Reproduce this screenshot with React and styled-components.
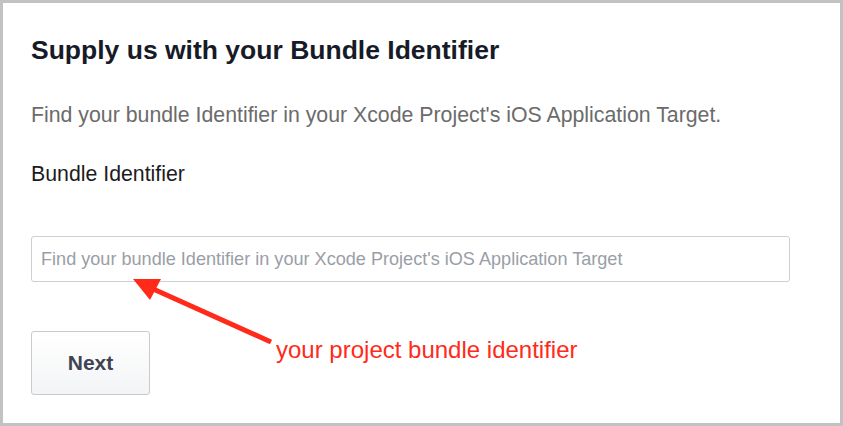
import React from 'react';
import styled, { createGlobalStyle } from 'styled-components';

const GlobalStyle = createGlobalStyle`
    html, body {
        margin: 0;
        padding: 0;
        background: #ffffff;
    }
    body {
        font-family: "Liberation Sans", Arial, sans-serif;
    }
`;

const Frame = styled.div`
    position: relative;
    box-sizing: border-box;
    width: 843px;
    height: 426px;
    border: 3px solid #c2c2c2;
    background: #ffffff;
    padding: 0 28px;
    overflow: hidden;
`;

const Title = styled.h2`
    margin: 32px 0 0 0;
    font-size: 26.5px;
    line-height: 30px;
    font-weight: bold;
    color: #171b27;
`;

const Hint = styled.p`
    margin: 37px 0 0 0;
    font-size: 21.3px;
    line-height: 26px;
    color: #6b6b6b;
`;

const Label = styled.label`
    display: block;
    margin: 33px 0 0 0;
    font-size: 21.3px;
    line-height: 26px;
    color: #1c1c1c;
`;

const Input = styled.input`
    display: block;
    box-sizing: border-box;
    width: 759px;
    height: 46px;
    margin: 49px 0 0 0;
    padding: 0 9px;
    border: 1px solid #cfcfcf;
    border-radius: 3px;
    font-family: "Liberation Sans", Arial, sans-serif;
    font-size: 18.1px;
    color: #333;
    outline: none;

    &::placeholder {
        color: #9a9ea6;
    }
`;

const Button = styled.button`
    display: block;
    box-sizing: border-box;
    width: 119px;
    height: 64px;
    margin: 49px 0 0 0;
    border: 1px solid #cacaca;
    border-radius: 3px;
    background: linear-gradient(#ffffff, #f3f4f6);
    font-family: "Liberation Sans", Arial, sans-serif;
    font-size: 21px;
    font-weight: bold;
    color: #3f4452;
    cursor: pointer;
`;

const Arrow = styled.svg`
    position: absolute;
    left: 0;
    top: 0;
    pointer-events: none;
`;

const Note = styled.span`
    position: absolute;
    left: 273px;
    top: 333px;
    font-size: 24px;
    color: #ff2a1a;
    white-space: nowrap;
`;

export default function App() {
    return (
        <>
            <GlobalStyle />
            <Frame>
                <Title>Supply us with your Bundle Identifier</Title>
                <Hint>Find your bundle Identifier in your Xcode Project's iOS Application Target.</Hint>
                <Label htmlFor="bundle">Bundle Identifier</Label>
                <Input
                    id="bundle"
                    placeholder="Find your bundle Identifier in your Xcode Project's iOS Application Target"
                />
                <Button>Next</Button>
                <Arrow width="843" height="426" viewBox="0 0 843 426">
                    <line x1="268" y1="339" x2="148" y2="285" stroke="#ff2a1a" strokeWidth="5" />
                    <polygon points="130,276 158,276 147,297" fill="#ff2a1a" />
                </Arrow>
                <Note>your project bundle identifier</Note>
            </Frame>
        </>
    );
}
